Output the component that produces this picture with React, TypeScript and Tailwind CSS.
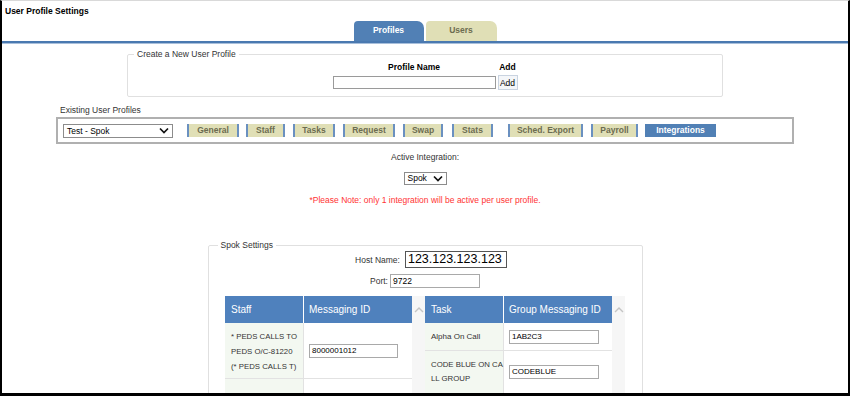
import React from "react";

const profileTabs = [
  { label: "General", className: "w-[52px] ml-[14px]" },
  { label: "Staff", className: "w-[39px] ml-[7px]" },
  { label: "Tasks", className: "w-[42px] ml-[8px]" },
  { label: "Request", className: "w-[52px] ml-[8px]" },
  { label: "Swap", className: "w-[40px] ml-[8px]" },
  { label: "Stats", className: "w-[41px] ml-[9px]" },
  { label: "Sched. Export", className: "w-[75px] ml-[15px]" },
  { label: "Payroll", className: "w-[47px] ml-[8px]" },
];

const ChevronDown = () => (
  <svg width="10" height="7" viewBox="0 0 10 7" className="shrink-0">
    <path d="M1 1.5 L5 5.5 L9 1.5" fill="none" stroke="#111" strokeWidth="1.7" />
  </svg>
);

const ChevronUp = () => (
  <svg width="10" height="6" viewBox="0 0 10 6">
    <path d="M1 5 L5 1 L9 5" fill="none" stroke="#c4c4c4" strokeWidth="1.4" />
  </svg>
);

const ScrollCol = () => (
  <div className="w-[13px] bg-[#f6f6f6] flex flex-col">
    <div className="h-[27px] flex items-center justify-center">
      <ChevronUp />
    </div>
  </div>
);

const CellInput = ({ value, className }: { value: string; className: string }) => (
  <div
    className={`h-[14px] border border-[#a9a9a9] bg-white px-[2px] leading-[12px] text-[8px] text-black ${className}`}
  >
    {value}
  </div>
);

export default function App() {
  return (
    <div className="w-[850px] h-[396px] overflow-hidden bg-white border-t border-t-[#d9d9d9] border-x-2 border-x-black border-b-[3px] border-b-black font-['Liberation_Sans',Arial,sans-serif] text-[8.5px] text-[#333]">
      {/* title */}
      <div className="h-[20px] pt-[4px] pl-[3px] leading-[12px] font-bold text-black">
        User Profile Settings
      </div>

      {/* top tabs */}
      <div className="h-[20px] flex justify-center items-end gap-[2px]">
        <div className="w-[70px] h-[20px] rounded-tl-[4px] rounded-tr-[7px] bg-[#5180b5] text-white font-bold flex items-center justify-center pb-[2px]">
          Profiles
        </div>
        <div className="w-[71px] h-[20px] rounded-tl-[4px] rounded-tr-[7px] bg-[#e0dfb6] text-[#6c6c50] font-bold flex items-center justify-center pb-[2px]">
          Users
        </div>
      </div>
      <div className="h-[2px] bg-[#4a79b0]" />
      <div className="h-[1px] bg-[#a8bfdb]" />

      {/* create a new user profile */}
      <fieldset className="w-[596px] mx-auto mt-[5px] border border-[#e0e0e0] rounded-[2px] pb-[6px]">
        <legend className="ml-[6px] px-[3px] leading-[10px] text-[#333]">Create a New User Profile</legend>
        <div className="flex justify-center pt-[2px]">
          <div className="grid grid-cols-[163px_20px] gap-x-[2px] text-black">
            <div className="leading-[12px] font-bold text-center">Profile Name</div>
            <div className="leading-[12px] font-bold text-center">Add</div>
            <div className="mt-[2px] h-[15px] flex items-center">
              <div className="w-full h-[13px] border border-[#9a9a9a] bg-white" />
            </div>
            <div className="mt-[2px] h-[15px] border border-[#c9d3e0] bg-[#f4f6f9] flex items-center justify-center leading-[12px]">
              Add
            </div>
          </div>
        </div>
      </fieldset>

      {/* existing user profiles */}
      <div className="w-[738px] mx-auto mt-[7px]">
        <div className="pl-[4px] leading-[12px] text-[#333]">Existing User Profiles</div>
        <div className="mt-[1px] h-[27px] border-2 border-[#b0b0b0] pl-[5px] flex items-center">
          <div className="w-[110px] h-[14px] border border-[#8c8c8c] bg-white pl-[3px] pr-[3px] flex items-center justify-between text-black leading-[12px]">
            <span>Test - Spok</span>
            <ChevronDown />
          </div>
          {profileTabs.map((t) => (
            <div
              key={t.label}
              className={`h-[13px] border-x-2 border-x-[#6a90c0] bg-[#e0dfb6] text-[#6c6c50] font-bold flex items-center justify-center leading-[11px] ${t.className}`}
            >
              {t.label}
            </div>
          ))}
          <div className="w-[71px] ml-[7px] h-[13px] bg-[#5180b5] text-white font-bold flex items-center justify-center leading-[11px]">
            Integrations
          </div>
        </div>
      </div>

      {/* active integration */}
      <div className="mt-[7px] leading-[12px] text-center text-[#333]">Active Integration:</div>
      <div className="mt-[9px] flex justify-center">
        <div className="w-[43px] h-[13px] border border-[#8c8c8c] bg-white pl-[3px] pr-[3px] flex items-center justify-between text-black leading-[11px]">
          <span>Spok</span>
          <ChevronDown />
        </div>
      </div>
      <div className="mt-[9px] leading-[12px] text-center text-[#ff3333]">
        *Please Note: only 1 integration will be active per user profile.
      </div>

      {/* spok settings */}
      <fieldset className="w-[435px] mx-auto mt-[34px] border border-[#e0e0e0] rounded-[2px] h-[200px]">
        <legend className="ml-[9px] px-[3px] leading-[10px] text-[#333]">Spok Settings</legend>
        <div className="mt-[1px] pl-[12px] flex justify-center items-center gap-[5px]">
          <span className="leading-[12px]">Host Name:</span>
          <div className="w-[102px] h-[17px] border border-[#555] bg-white pl-[2px] text-[12.5px] leading-[15px] text-black">
            123.123.123.123
          </div>
        </div>
        <div className="mt-[6px] flex justify-center items-center gap-[2px]">
          <span className="leading-[12px]">Port:</span>
          <div className="w-[90px] h-[14px] border border-[#a9a9a9] bg-white pl-[2px] leading-[12px] text-black">9722</div>
        </div>

        <div className="mt-[8px] flex justify-center">
          {/* staff table */}
          <div className="w-[187px]">
            <div className="h-[27px] flex bg-[#4f81bd] text-white text-[10px]">
              <div className="w-[79px] pl-[6px] flex items-center border-r border-r-white">Staff</div>
              <div className="flex-1 pl-[5px] flex items-center">Messaging ID</div>
            </div>
            <div className="h-[56px] flex border-b border-b-[#e2e2e2]">
              <div className="w-[79px] bg-[#f3f8f1] pl-[6px] pt-[2px] flex items-center leading-[15px] text-[7.8px] text-[#333] whitespace-nowrap border-r border-r-[#e2e2e2]">
                <span>
                  * PEDS CALLS TO
                  <br />
                  PEDS O/C-81220
                  <br />
                  (* PEDS CALLS T)
                </span>
              </div>
              <div className="flex-1 pl-[5px] flex items-center">
                <CellInput value="8000001012" className="w-[89px]" />
              </div>
            </div>
            <div className="h-[40px] flex">
              <div className="w-[79px] bg-[#f3f8f1] border-r border-r-[#e2e2e2]" />
              <div className="flex-1" />
            </div>
          </div>
          <ScrollCol />

          {/* task table */}
          <div className="w-[187px]">
            <div className="h-[27px] flex bg-[#4f81bd] text-white text-[10px]">
              <div className="w-[79px] pl-[6px] flex items-center border-r border-r-white">Task</div>
              <div className="flex-1 pl-[5px] flex items-center">Group Messaging ID</div>
            </div>
            <div className="h-[28px] flex border-b border-b-[#e2e2e2]">
              <div className="w-[79px] bg-[#f3f8f1] pl-[6px] pt-[1px] flex items-center text-[8px] text-[#333] border-r border-r-[#e2e2e2]">
                Alpha On Call
              </div>
              <div className="flex-1 pl-[5px] flex items-center">
                <CellInput value="1AB2C3" className="w-[90px]" />
              </div>
            </div>
            <div className="h-[42px] flex">
              <div className="w-[79px] bg-[#f3f8f1] pl-[6px] flex items-center leading-[14px] text-[7.8px] text-[#333] whitespace-nowrap border-r border-r-[#e2e2e2]">
                <span>
                  CODE BLUE ON CA
                  <br />
                  LL GROUP
                </span>
              </div>
              <div className="flex-1 pl-[5px] flex items-center">
                <CellInput value="CODEBLUE" className="w-[90px]" />
              </div>
            </div>
          </div>
          <ScrollCol />
        </div>
      </fieldset>
    </div>
  );
}
